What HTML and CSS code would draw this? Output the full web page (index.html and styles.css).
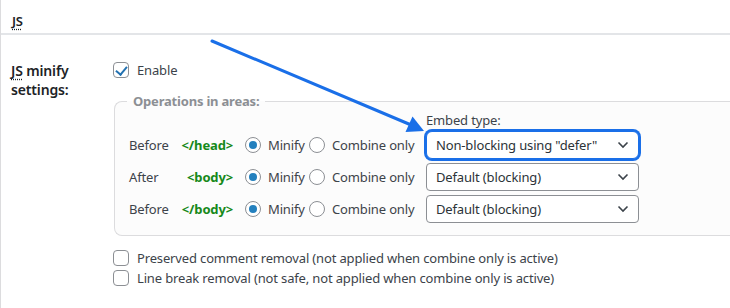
FILE: index.html
```html
<!DOCTYPE html>
<html lang="en">
<head>
    <meta charset="UTF-8">
    <title>JS minify settings</title>
    <link rel="stylesheet" href="styles.css">
</head>
<body>
    <div class="page">
        <h2 class="section-title"><abbr title="JavaScript">JS</abbr></h2>

        <div class="setting">
            <div class="setting-label"><abbr title="JavaScript">JS</abbr> minify<br>settings:</div>
            <div class="setting-body">
                <label class="check"><input type="checkbox" checked> Enable</label>

                <fieldset class="areas">
                    <legend>Operations in areas:</legend>
                    <div class="ops">
                        <span></span><span></span><span></span><span></span>
                        <span class="embed-label">Embed type:</span>

                        <span class="area">Before</span>
                        <span class="tag">&lt;/head&gt;</span>
                        <label class="radio"><input type="radio" name="head" checked> Minify</label>
                        <label class="radio"><input type="radio" name="head"> Combine only</label>
                        <select class="embed focused">
                            <option>Non-blocking using "defer"</option>
                        </select>

                        <span class="area">After</span>
                        <span class="tag">&lt;body&gt;</span>
                        <label class="radio"><input type="radio" name="body" checked> Minify</label>
                        <label class="radio"><input type="radio" name="body"> Combine only</label>
                        <select class="embed">
                            <option>Default (blocking)</option>
                        </select>

                        <span class="area">Before</span>
                        <span class="tag">&lt;/body&gt;</span>
                        <label class="radio"><input type="radio" name="end" checked> Minify</label>
                        <label class="radio"><input type="radio" name="end"> Combine only</label>
                        <select class="embed">
                            <option>Default (blocking)</option>
                        </select>
                    </div>
                </fieldset>

                <div class="extra">
                    <label class="check"><input type="checkbox"> Preserved comment removal (not applied when combine only is active)</label>
                    <label class="check"><input type="checkbox"> Line break removal (not safe, not applied when combine only is active)</label>
                </div>
            </div>
        </div>

        <!-- annotation arrow drawn over the form -->
        <svg class="arrow" width="730" height="308" viewBox="0 0 730 308">
            <line x1="212" y1="41" x2="410" y2="124.5" stroke="#1a6fe8" stroke-width="3" stroke-linecap="round"/>
            <polygon points="424,131 405.5,132 412.5,116.5" fill="#1a6fe8"/>
        </svg>
    </div>
</body>
</html>
```

FILE: styles.css
```css
body {
    margin: 0;
    overflow: hidden;
    font-family: "Noto Sans", "Open Sans", sans-serif;
    font-size: 13px;
    letter-spacing: -0.15px;
    color: #3c434a;
    background: #fff;
}
.page {
    position: relative;
    min-height: 308px;
    border-left: 1px solid #dcdcde;
}
abbr {
    text-decoration: underline dotted;
    text-underline-offset: 3px;
}
.section-title {
    margin: 0;
    height: 35px;
    padding: 11px 0 0 11px;
    box-sizing: border-box;
    font-size: 13px;
    font-weight: 600;
    line-height: 20px;
    color: #1d2327;
    border-bottom: 2px solid #e3e5e8;
}
.setting {
    display: flex;
}
.setting-label {
    flex: none;
    width: 112px;
    padding: 26px 0 0 10px;
    box-sizing: border-box;
    font-size: 14px;
    font-weight: 600;
    line-height: 19px;
    color: #1d2327;
}
.setting-body {
    flex: 1;
    min-width: 0;
    padding-top: 25px;
}
.check {
    display: flex;
    align-items: center;
    gap: 8px;
    height: 20px;
    line-height: 20px;
    white-space: nowrap;
}
.check input {
    appearance: none;
    margin: 0;
    width: 16px;
    height: 16px;
    border: 1px solid #8c8f94;
    border-radius: 4px;
    background: #fff;
    flex: none;
    position: relative;
}
.check input:checked::after {
    content: "";
    position: absolute;
    left: 4px;
    top: 1px;
    width: 5px;
    height: 9px;
    border: solid #2271b1;
    border-width: 0 2px 2px 0;
    transform: rotate(40deg);
}
/* the box runs on past the right edge of the screenshot, so no right border */
.areas {
    margin: 11px 0 0 1px;
    width: 616px;
    box-sizing: border-box;
    padding: 0 0 12px 14px;
    border: 1px solid #dcdcde;
    border-right: none;
    border-radius: 8px 0 0 8px;
    background: #fcfcfc;
}
.areas legend {
    margin-left: -2px;
    padding: 0 6px;
    font-size: 13px;
    letter-spacing: -0.2px;
    font-weight: 700;
    line-height: 20px;
    color: #8c8f94;
}
.ops {
    display: grid;
    grid-template-columns: 50px 66px 64px 117px 213px;
    grid-template-rows: 16px;
    grid-auto-rows: 28px;
    row-gap: 4px;
    align-items: center;
}
.ops .embed-label {
    align-self: end;
    line-height: 18px;
    margin-bottom: -2px;
}
.tag {
    text-align: right;
    padding-right: 12px;
    font-weight: 700;
    color: #16891a;
}
.radio {
    display: flex;
    align-items: center;
    gap: 7px;
    white-space: nowrap;
}
.radio input {
    appearance: none;
    margin: 0;
    width: 16px;
    height: 16px;
    border: 1px solid #8c8f94;
    border-radius: 50%;
    background: #fff;
    flex: none;
    display: grid;
    place-items: center;
}
.radio input:checked::before {
    content: "";
    width: 8px;
    height: 8px;
    border-radius: 50%;
    background: #2380be;
}
.embed {
    appearance: none;
    width: 213px;
    height: 28px;
    padding: 0 24px 0 9px;
    font: inherit;
    letter-spacing: inherit;
    color: #2c3338;
    border: 1px solid #8c8f94;
    border-radius: 4px;
    background: #fff url("data:image/svg+xml,%3Csvg xmlns='http://www.w3.org/2000/svg' width='12' height='8' viewBox='0 0 12 8'%3E%3Cpath d='M1.5 1.5 6 6l4.5-4.5' fill='none' stroke='%233c434a' stroke-width='1.6'/%3E%3C/svg%3E") no-repeat right 9px center;
}
.embed.focused {
    border-color: #1a6fe8;
    box-shadow: 0 0 0 2px #1a6fe8;
    border-radius: 6px;
}
.extra {
    margin-top: 12px;
}
.arrow {
    position: absolute;
    left: -1px;
    top: 0;
    pointer-events: none;
}
```
